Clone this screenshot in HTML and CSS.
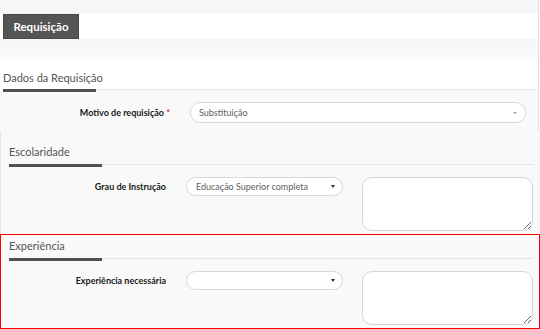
FILE: index.html
```html
<!DOCTYPE html>
<html lang="pt">
<head>
<meta charset="utf-8">
<title>Requisição</title>
<link rel="stylesheet" href="styles.css">
</head>
<body>
<div class="upper">
  <div class="strip"></div>
  <div class="tabbar"><div class="tab">Requisição</div></div>
  <section class="dados">
    <div class="head">Dados da Requisição</div>
    <div class="rule"><div class="rule-dark"></div><div class="rule-light"></div></div>
    <div class="body">
      <div class="row row-wide">
        <div class="label">Motivo de requisição <span class="req">*</span></div>
        <div class="select select-wide"><span class="val">Substituição</span><span class="arrow arrow-light"></span></div>
      </div>
    </div>
  </section>
</div>
<section class="block escolaridade">
  <div class="head">Escolaridade</div>
  <div class="rule"><div class="rule-dark"></div><div class="rule-light"></div></div>
  <div class="row">
    <div class="label">Grau de Instrução</div>
    <div class="select"><span class="val">Educação Superior completa</span><span class="arrow"></span></div>
    <textarea class="note"></textarea>
  </div>
</section>
<section class="block experiencia">
  <div class="head">Experiência</div>
  <div class="rule"><div class="rule-dark"></div><div class="rule-light"></div></div>
  <div class="row">
    <div class="label">Experiência necessária</div>
    <div class="select"><span class="val"></span><span class="arrow"></span></div>
    <textarea class="note"></textarea>
  </div>
</section>
</body>
</html>
```
FILE: styles.css
```css
* { box-sizing: border-box; }
html, body { margin: 0; padding: 0; }
body {
  width: 540px;
  height: 329px;
  overflow: hidden;
  background: #f9f9f9;
  font-family: Lato, "Open Sans", sans-serif;
  color: #222;
}
.upper {
  width: 539px;
  border-right: 1px solid #e2e2e2;
}
.strip { height: 14px; background: #f6f6f6; }
.tabbar { height: 25px; background: #fff; padding-left: 3px; }
.tab {
  width: 76px;
  height: 25px;
  background: #555;
  border: 1px solid #484848;
  color: #fff;
  font-weight: 700;
  font-size: 11.5px;
  line-height: 23px;
  text-align: center;
}
.dados {
  background: linear-gradient(#f5f5f5 0, #fff 26px, #fff 50px, #f9f9f9 50px);
}
.head {
  font-size: 11px;
  line-height: 14px;
  color: #555;
}
.dados .head { padding: 32px 0 0 3px; }
.rule { display: flex; align-items: flex-start; height: 3px; }
.rule-dark { width: 93px; height: 3px; background: #505050; }
.rule-light { flex: 1; height: 1px; background: #e6e6e6; }
.dados .rule { margin: 4px 0 0 3px; }
.dados .body { padding: 10px 0 8px 3px; }

.row {
  display: grid;
  grid-template-columns: 157px 157px 170px;
  column-gap: 20px;
  align-items: start;
}
.row-wide { grid-template-columns: 167px 336px; }
.row .note { margin-left: -1px; }
.label {
  font-size: 9px;
  font-weight: 700;
  text-align: right;
  line-height: 19px;
  color: #1a1a1a;
  white-space: nowrap;
}
.row-wide .label { line-height: 21px; }
.req { color: #e0201e; }
.select {
  height: 19px;
  background: #fff;
  border: 1px solid #d8d8d8;
  border-radius: 10px;
  display: flex;
  align-items: center;
  justify-content: space-between;
  padding: 0 7px 0 9px;
  font-size: 9px;
  color: #5e5e5e;
}
.select-wide { height: 21px; padding-left: 8px; }
.arrow {
  width: 0;
  height: 0;
  border-left: 2.5px solid transparent;
  border-right: 2.5px solid transparent;
  border-top: 3px solid #333;
}
.arrow-light { border-top-color: #999; border-top-width: 2.5px; margin-right: 1px; }
.note {
  display: block;
  width: 171px;
  height: 54px;
  margin: 0;
  background: #fff;
  border: 1px solid #d6d6d6;
  border-radius: 10px;
  resize: both;
  font: inherit;
}
.block { padding: 0 6px 0 8px; }
.escolaridade {
  height: 103px;
  border-left: 1px solid #e6e6e6;
  padding-top: 14px;
}
.escolaridade .rule, .experiencia .rule { margin-top: 5px; }
.escolaridade .row, .experiencia .row { margin-top: 10px; }
.experiencia {
  height: 95px;
  border: 1px solid #f00;
  padding-top: 4px;
}
```
